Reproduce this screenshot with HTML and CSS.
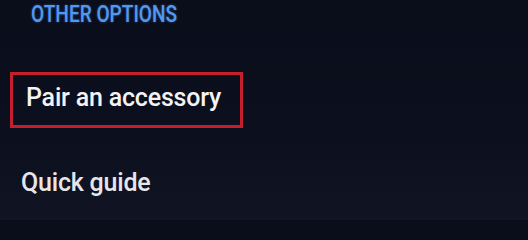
FILE: index.html
```html
<!DOCTYPE html>
<html lang="en">
<head>
<meta charset="utf-8">
<title>Other options</title>
<link rel="stylesheet" href="styles.css">
</head>
<body>
<section class="menu">
  <h2 class="menu-title">OTHER OPTIONS</h2>
  <ul class="menu-list">
    <li class="menu-item is-focused">Pair an accessory</li>
    <li class="menu-item">Quick guide</li>
  </ul>
</section>
</body>
</html>
```
FILE: styles.css
```css
html, body {
  margin: 0;
  padding: 0;
}
body {
  width: 528px;
  height: 220px;
  overflow: hidden;
  background: linear-gradient(180deg, #0a0d1a 0%, #0c0f1d 60%, #101423 100%);
  font-family: Roboto, "Noto Sans", "Liberation Sans", sans-serif;
}
.menu {
  display: flex;
  flex-direction: column;
}
.menu-title {
  margin: 0;
  padding: 0 0 0 31px;
  height: 30px;
  box-sizing: border-box;
  font-size: 23px;
  line-height: 30px;
  font-weight: 500;
  color: #5398f0;
  text-shadow: 0 0 3px rgba(70, 140, 240, 0.5);
  transform: scaleX(0.83);
  transform-origin: 31px 0;
  white-space: nowrap;
}
.menu-list {
  list-style: none;
  margin: 0;
  padding: 0;
  display: flex;
  flex-direction: column;
}
.menu-item {
  font-size: 25px;
  line-height: 50px;
  font-weight: 500;
  letter-spacing: -0.2px;
  color: #e6e6ea;
  padding-left: 21px;
  margin-top: 30px;
  white-space: nowrap;
}
.menu-item.is-focused {
  margin-top: 42px;
  margin-left: 10px;
  width: 233px;
  height: 56px;
  box-sizing: border-box;
  border: 3px solid #c41f2e;
  padding: 0 0 5px 13px;
  line-height: 45px;
  color: #f3f3f5;
}
```
